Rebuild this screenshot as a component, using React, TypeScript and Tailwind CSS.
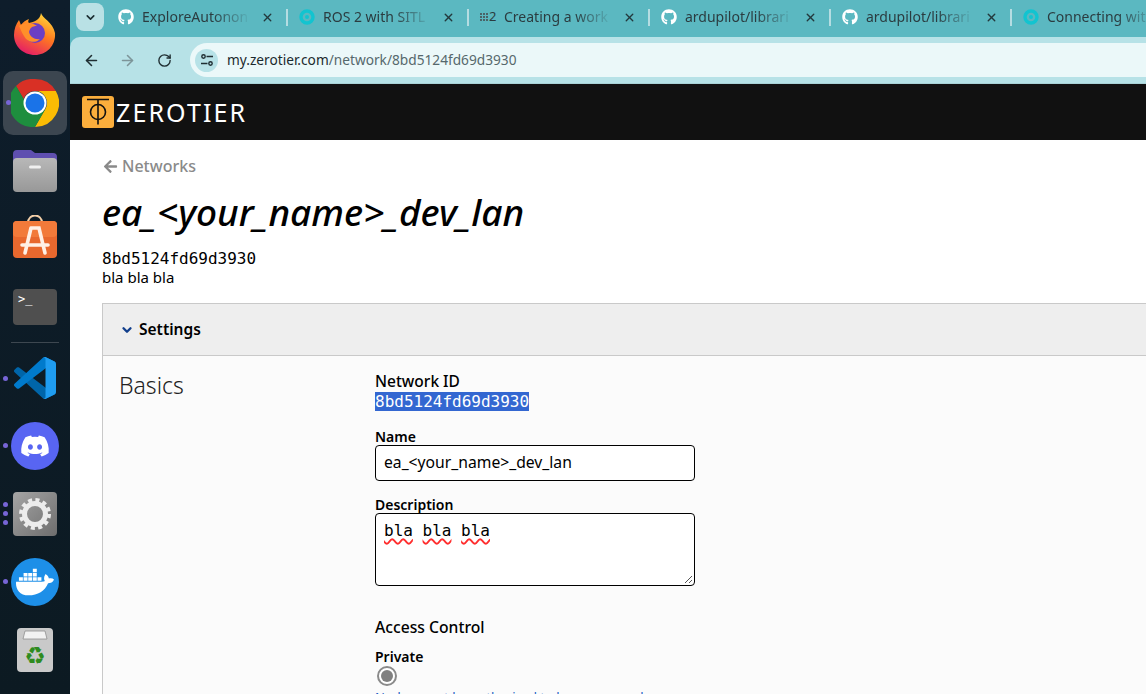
import { ArrowLeft, ArrowRight, ChevronDown, RotateCw, X } from 'lucide-react';
import { FaArrowLeft, FaDiscord, FaDocker, FaGithub } from 'react-icons/fa';

const sans = { fontFamily: '"Noto Sans", sans-serif' };
const mono = { fontFamily: '"DejaVu Sans Mono", monospace' };

function Orb() {
  return (
    <svg viewBox="0 0 16 16" className="size-4 shrink-0">
      <circle cx="8" cy="8" r="6" fill="none" stroke="#12c4d0" strokeWidth="3.4" />
      <circle cx="8" cy="8" r="2" fill="#12c4d0" />
    </svg>
  );
}

function Grid2() {
  return (
    <span className="flex w-4 shrink-0 items-center gap-[1px] text-[13px] text-[#2b3c40]">
      <span className="grid shrink-0 grid-cols-3 gap-[1px]">
        {Array.from({ length: 9 }).map((_, i) => (
          <span key={i} className="size-[2px] bg-[#4a6368]" />
        ))}
      </span>
      2
    </span>
  );
}

const gh = <FaGithub className="size-4 shrink-0 text-white" />;

const tabs = [
  { title: 'ExploreAutonon', icon: gh },
  { title: 'ROS 2 with SITL', icon: <Orb /> },
  { title: 'Creating a work', icon: <Grid2 /> },
  { title: 'ardupilot/librari', icon: gh },
  { title: 'ardupilot/librari', icon: gh },
  { title: 'Connecting wit', icon: <Orb /> },
];

function Tab({ title, icon }: { title: string; icon: React.ReactNode }) {
  return (
    <div className="flex h-[34px] w-[181px] shrink-0 items-center pl-[11px]">
      {icon}
      <div className="mb-[2px] ml-2 min-w-0 flex-1 overflow-hidden whitespace-nowrap text-[14px] text-[#2b3c40] [mask-image:linear-gradient(to_right,black_62%,transparent_96%)]">
        {title}
      </div>
      <X className="ml-[6px] mr-[12px] size-[13px] shrink-0 text-[#23383c]" strokeWidth={2.5} />
      <div className="h-[17px] w-[2px] shrink-0 bg-[#b5dde2]" />
    </div>
  );
}

function Dot({ className }: { className: string }) {
  return <span className={`absolute left-[3px] size-[5px] rounded-full bg-[#7765d6] ${className}`} />;
}

function Dock() {
  return (
    <aside className="flex w-[70px] shrink-0 flex-col items-center bg-gradient-to-b from-[#0e1d2b] to-[#0c1a22]">
      <svg viewBox="0 0 44 44" className="mt-[12px] size-[44px]">
        <defs>
          <linearGradient id="fx" x1="0.75" y1="0" x2="0.25" y2="1">
            <stop offset="0" stopColor="#ffd93b" />
            <stop offset="0.45" stopColor="#ff7a1f" />
            <stop offset="1" stopColor="#e3186b" />
          </linearGradient>
        </defs>
        <path d="M28 1c1 5 12 9 14 20 1 13-9 22-20 22C10 43 1 34 1 23 1 17 3 12 6 8l2 5c2-3 5-5 8-6-1 2-1 3 0 4 5-1 11-3 12-10z" fill="url(#fx)" />
        <circle cx="22" cy="21" r="10" fill="#6b3fc4" />
        <path d="M6 14c5-4 13-4 18 0-5 0-7 2-8 6 1 5 6 8 11 7-5 5-13 3-16-3-2-3-3-6-5-10z" fill="#ff8f2a" />
      </svg>
      <div className="relative mt-[15px] flex h-[64px] w-[64px] items-center justify-center rounded-[10px] bg-[#3c4650]">
        <Dot className="top-[29px]" />
        <svg viewBox="0 0 48 48" className="size-[48px]">
          <path d="M24 0a24 24 0 0 1 20.8 12H24a12 12 0 0 0-11.3 8L5 6.9A24 24 0 0 1 24 0z" fill="#d93025" />
          <path d="M44.8 12A24 24 0 0 1 24 48l10.4-18A12 12 0 0 0 24 12z" fill="#fbbc04" />
          <path d="M5 6.9 15 24a12 12 0 0 0 19.4 6L24 48A24 24 0 0 1 5 6.9z" fill="#1e8e3e" />
          <circle cx="24" cy="24" r="11.5" fill="#fff" />
          <circle cx="24" cy="24" r="9.5" fill="#1a73e8" />
        </svg>
      </div>
      <svg viewBox="0 0 44 42" className="mt-[15px] h-[42px] w-[44px]">
        <defs>
          <linearGradient id="fold" x1="0" y1="0" x2="0" y2="1">
            <stop offset="0" stopColor="#b8b8b8" />
            <stop offset="1" stopColor="#989898" />
          </linearGradient>
        </defs>
        <path d="M0 4a4 4 0 0 1 4-4h14l4 3h18a4 4 0 0 1 4 4v14H0z" fill="#5f4fb0" />
        <rect y="8" width="44" height="34" rx="4" fill="url(#fold)" />
        <rect x="16" y="15.5" width="12" height="3" rx="1.5" fill="#f0f0f0" />
      </svg>
      <svg viewBox="0 0 44 43" className="mt-[23px] h-[43px] w-[44px]">
        <path d="M15 8c0-10 14-10 14 0" fill="none" stroke="#f3cfa8" strokeWidth="2" />
        <rect y="6" width="44" height="37" rx="4" fill="#e8682e" />
        <rect y="6" width="44" height="16" rx="4" fill="#f27a3a" />
        <path d="M18 13h8l6 25M18 13l-6 25" fill="none" stroke="#fff0e6" strokeWidth="3.6" strokeLinecap="round" />
        <path d="M9 30h26" stroke="#fff0e6" strokeWidth="3.6" strokeLinecap="round" />
      </svg>
      <div className="mt-[31px] h-[36px] w-[44px] rounded-[4px] bg-[#4f4f4f] px-[5px] pt-[3px] text-[12px] leading-[14px] text-white" style={mono}>
        &gt;_
      </div>
      <div className="mt-[17px] h-[1px] w-[48px] bg-[#3d4750]" />
      <div className="relative mt-[14px] flex h-[42px] w-full justify-center">
        <Dot className="top-[19px]" />
        <svg viewBox="0 0 100 100" className="size-[42px]">
          <path d="M96.46 89.2 75.86 99.12c-2.39 1.15-5.24.67-7.11-1.2L1.3 36.42c-1.82-1.66-1.81-4.51 0-6.17l5.51-5c1.49-1.35 3.72-1.45 5.32-.24l81.23 61.62c2.73 2.07 6.64.12 6.64-3.3v.24c0 2.4-1.38 4.59-3.54 5.63z" fill="#0065a9" />
          <path d="M96.46 10.8 75.86.88c-2.39-1.15-5.24-.67-7.11 1.2L1.3 63.58c-1.82 1.66-1.81 4.51 0 6.17l5.51 5c1.49 1.35 3.72 1.45 5.32.24L93.36 13.37c2.73-2.07 6.64-.12 6.64 3.3v-.24c0-2.4-1.38-4.59-3.54-5.63z" fill="#007acc" />
          <path d="M75.86 99.13c-2.39 1.14-5.24.66-7.11-1.21 2.31 2.3 6.25.67 6.25-2.59V4.67c0-3.26-3.94-4.89-6.25-2.59C70.62.21 73.47-.27 75.86.87l20.6 9.91c2.16 1.04 3.54 3.23 3.54 5.63v67.18c0 2.4-1.38 4.59-3.54 5.63z" fill="#1f9cf0" />
        </svg>
      </div>
      <div className="relative mt-[23px] flex w-full justify-center">
        <Dot className="top-[21px]" />
        <div className="flex size-[48px] items-center justify-center rounded-full bg-[#5865f2]">
          <FaDiscord className="size-[30px] text-white" />
        </div>
      </div>
      <div className="relative mt-[22px] flex w-full justify-center">
        <span className="absolute left-[3px] top-[10px] flex flex-col gap-[4px]">
          <span className="size-[5px] rounded-full bg-[#7765d6]" />
          <span className="size-[5px] rounded-full bg-[#7765d6]" />
          <span className="size-[5px] rounded-full bg-[#7765d6]" />
        </span>
        <div className="flex size-[44px] items-center justify-center rounded-[4px] bg-gradient-to-br from-[#a5a5a5] to-[#6e6e6e]">
          <svg viewBox="0 0 32 32" className="size-[32px]">
            <circle cx="16" cy="16" r="10.5" fill="none" stroke="#ececec" strokeWidth="5" />
            <circle cx="16" cy="16" r="14" fill="none" stroke="#ececec" strokeWidth="4" strokeDasharray="4 3.33" />
          </svg>
        </div>
      </div>
      <div className="relative mt-[22px] flex w-full justify-center">
        <Dot className="top-[21px]" />
        <div className="flex size-[48px] items-center justify-center rounded-full bg-[#1d8fe8]">
          <FaDocker className="size-[38px] text-white" />
        </div>
      </div>
      <div className="mt-[22px] flex h-[44px] w-[36px] flex-col items-center rounded-[4px] bg-[#c9c9c9] pt-[2px]">
        <svg viewBox="0 0 30 10" className="h-[10px] w-[30px]">
          <path d="M3 9 5 1h20l2 8z" fill="#f2f2f2" stroke="#8f8f8f" strokeWidth="0.8" />
        </svg>
        <span className="mt-[4px] text-[24px] leading-none text-[#2e8b1e]" style={{ fontFamily: '"DejaVu Sans", sans-serif' }}>♻</span>
      </div>
    </aside>
  );
}

function Chrome() {
  return (
    <>
      <div className="flex h-[37px] items-start overflow-hidden bg-[#5bb8c1] pl-[6px]">
        <div className="mt-[3px] flex size-[28px] shrink-0 items-center justify-center rounded-[8px] bg-[#b9e1e5]">
          <ChevronDown className="size-[13px] text-[#1c2f33]" strokeWidth={3} />
        </div>
        <div className="ml-[3px] flex">
          {tabs.map((t, i) => (
            <Tab key={i} title={t.title} icon={t.icon} />
          ))}
        </div>
      </div>
      <div className="bg-[#5bb8c1]">
        <div className="flex h-[47px] items-center rounded-tl-[10px] border-b border-[#a9d2d7] bg-[#b7e2e7] pl-[13px]">
          <ArrowLeft className="size-[17px] text-[#1f2e32]" strokeWidth={2.2} />
          <ArrowRight className="ml-[19px] size-[17px] text-[#7d9599]" strokeWidth={2.2} />
          <RotateCw className="ml-[21px] size-[15px] text-[#1f2e32]" strokeWidth={2.2} />
          <div className="ml-[18px] flex h-[34px] flex-1 items-center rounded-l-full bg-[#ebf8f9] pl-[5px]">
            <div className="flex size-[23px] items-center justify-center rounded-full bg-[#b7e2e7]">
              <svg viewBox="0 0 14 14" className="size-[14px]" fill="none" stroke="#1f2e32" strokeWidth="1.4">
                <circle cx="3.5" cy="3.5" r="1.7" />
                <path d="M6.5 3.5H13M1 10.5h6.5" />
                <circle cx="10.5" cy="10.5" r="1.7" />
              </svg>
            </div>
            <span className="ml-[9px] text-[13.7px] text-[#1c2a2e]">
              my.zerotier.com<span className="text-[#56686c]">/network/8bd5124fd69d3930</span>
            </span>
          </div>
        </div>
      </div>
    </>
  );
}

function SpellWord() {
  return <span className="underline decoration-[#ff2d2d] decoration-wavy decoration-[1.5px] underline-offset-2">bla</span>;
}

function Page() {
  return (
    <main className="h-[610px] overflow-hidden bg-white">
      <div className="flex h-[56px] items-center bg-[#111111] pl-[12px]">
        <svg viewBox="0 0 32 32" className="size-[32px]">
          <rect width="32" height="32" rx="3" fill="#fbae3c" />
          <path d="M5 3.5h22M16 3.5v25" stroke="#111" strokeWidth="1.6" />
          <circle cx="16" cy="16" r="7.5" fill="none" stroke="#111" strokeWidth="1.6" />
        </svg>
        <span className="ml-[2px] text-[25px] leading-none tracking-[2.1px] text-white">ZEROTIER</span>
      </div>
      <div className="pl-[32px]">
        <div className="mt-[15px] flex items-center text-[16px] font-medium leading-[22px] text-[#8a8a8a]">
          <FaArrowLeft className="ml-[1px] size-[15px]" />
          <span className="ml-[4px]">Networks</span>
        </div>
        <h1 className="mt-[13px] text-[37px] font-medium italic leading-[44px] text-black">ea_&lt;your_name&gt;_dev_lan</h1>
        <div className="mt-[15px] text-[16px] leading-[19px] text-black" style={mono}>8bd5124fd69d3930</div>
        <div className="text-[15px] leading-[19px] text-black">bla bla bla</div>
        <section className="mt-[16px] border border-r-0 border-[#c9c9c9] bg-[#fbfbfb]">
          <div className="flex h-[52px] items-center border-b border-[#c9c9c9] bg-[#eeeeee] pl-[17px]">
            <ChevronDown className="size-[14px] text-[#123f8c]" strokeWidth={4} />
            <span className="ml-[5px] pt-[1px] text-[15.5px] font-semibold text-black">Settings</span>
          </div>
          <div className="flex h-[400px] pl-[16px]">
            <div className="w-[256px] pt-[13px] text-[23px] font-light leading-[32px] text-[#222222]">Basics</div>
            <div className="w-[320px] pt-[14px]">
              <div className="text-[15.5px] font-medium leading-[22px] text-black">Network ID</div>
              <div className="w-fit bg-[#3367d1] text-[16px] leading-[19px] text-white" style={mono}>8bd5124fd69d3930</div>
              <div className="mt-[17px] text-[14px] font-semibold leading-[17px] text-black">Name</div>
              <div className="flex h-[36px] items-center rounded-[4px] border border-black bg-white pl-[8px] text-[15.7px] text-black">
                ea_&lt;your_name&gt;_dev_lan
              </div>
              <div className="mt-[15px] text-[14px] font-semibold leading-[17px] text-black">Description</div>
              <div className="relative h-[73px] rounded-[4px] border border-black bg-white pl-[8px] pt-[6px] text-[16px] leading-[21px] text-black" style={mono}>
                <SpellWord /> <SpellWord /> <SpellWord />
                <svg viewBox="0 0 9 9" className="absolute bottom-[1px] right-[1px] size-[9px]">
                  <path d="M1 8l7-7M5 8l3-3" stroke="#555" strokeWidth="1" />
                </svg>
              </div>
              <div className="mt-[30px] text-[15.7px] font-medium leading-[22px] text-black">Access Control</div>
              <div className="mt-[10px] text-[14px] font-semibold leading-[18px] text-black">Private</div>
              <div className="ml-[2px] flex size-[20px] items-center justify-center rounded-full border-2 border-[#8a8a8a] bg-white">
                <span className="size-[12px] rounded-full bg-[#808080]" />
              </div>
              <div className="mt-[3px] whitespace-nowrap text-[13px] leading-[16px] text-[#1c5fc4]">Nodes must be authorized to become members</div>
            </div>
          </div>
        </section>
      </div>
    </main>
  );
}

export default function App() {
  return (
    <div className="flex h-[694px] w-[1146px] overflow-hidden" style={sans}>
      <Dock />
      <div className="min-w-0 flex-1">
        <Chrome />
        <Page />
      </div>
    </div>
  );
}
